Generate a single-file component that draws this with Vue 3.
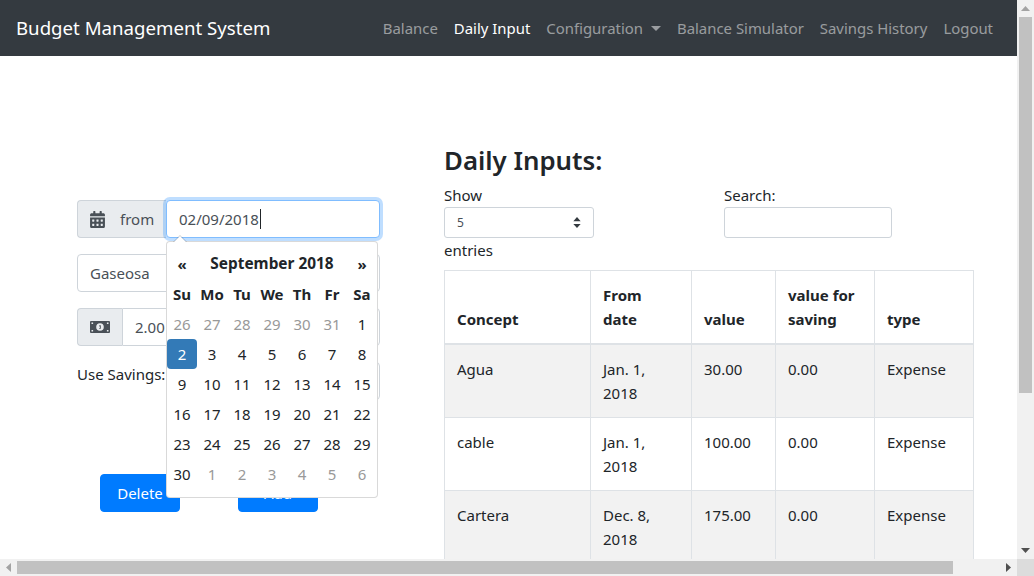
<template>
  <div class="frame">
    <div class="page">
      <nav class="navbar">
        <span class="brand">Budget Management System</span>
        <div class="nav-links">
          <a v-for="link in links" :key="link.label" class="nav-link" :class="{ active: link.active }">
            {{ link.label }}<span v-if="link.dropdown" class="caret"></span>
          </a>
        </div>
      </nav>

      <div class="content">
        <section class="form-col">
          <div class="input-group date-group">
            <div class="prepend from">
              <svg class="icon-cal" viewBox="0 0 448 512"><path fill="#495057" d="M0 464c0 26.500 21.500 48 48 48h352c26.500 0 48-21.500 48-48V192H0v272zm320-196c0-6.600 5.400-12 12-12h40c6.600 0 12 5.400 12 12v40c0 6.600-5.400 12-12 12h-40c-6.600 0-12-5.400-12-12v-40zm0 128c0-6.600 5.400-12 12-12h40c6.600 0 12 5.400 12 12v40c0 6.600-5.400 12-12 12h-40c-6.600 0-12-5.400-12-12v-40zM192 268c0-6.600 5.400-12 12-12h40c6.600 0 12 5.400 12 12v40c0 6.600-5.400 12-12 12h-40c-6.600 0-12-5.400-12-12v-40zm0 128c0-6.600 5.400-12 12-12h40c6.600 0 12 5.400 12 12v40c0 6.600-5.400 12-12 12h-40c-6.600 0-12-5.400-12-12v-40zM64 268c0-6.600 5.400-12 12-12h40c6.600 0 12 5.400 12 12v40c0 6.600-5.400 12-12 12H76c-6.600 0-12-5.400-12-12v-40zm0 128c0-6.600 5.400-12 12-12h40c6.600 0 12 5.400 12 12v40c0 6.600-5.400 12-12 12H76c-6.600 0-12-5.400-12-12v-40zM400 64h-48V16c0-8.800-7.200-16-16-16h-32c-8.800 0-16 7.200-16 16v48H160V16c0-8.800-7.200-16-16-16h-32c-8.800 0-16 7.200-16 16v48H48C21.500 64 0 85.500 0 112v48h448v-48c0-26.500-21.500-48-48-48z"/></svg>
              <span>from</span>
            </div>
            <div class="control focused">02/09/2018<span class="text-caret"></span></div>

            <div class="datepicker">
              <div class="dp-head">
                <span class="dp-nav">«</span>
                <span class="dp-title">September 2018</span>
                <span class="dp-nav">»</span>
              </div>
              <div class="dp-grid">
                <span v-for="d in dow" :key="d" class="dp-cell dow">{{ d }}</span>
                <span
                  v-for="(day, i) in days"
                  :key="i"
                  class="dp-cell"
                  :class="{ old: day.old, selected: day.selected }"
                >{{ day.n }}</span>
              </div>
            </div>
          </div>

          <div class="control plain">Gaseosa</div>

          <div class="input-group">
            <div class="prepend money">
              <svg class="icon-money" viewBox="0 0 20 12">
                <path fill="#495057" fill-rule="evenodd" d="M1 0h18a1 1 0 0 1 1 1v10a1 1 0 0 1-1 1H1a1 1 0 0 1-1-1V1a1 1 0 0 1 1-1zm9 2.200a3.800 3.800 0 1 0 0 7.600 3.800 3.800 0 0 0 0-7.600zM1.500 1.500v1.600h1.600V1.500zm15.400 0v1.600h1.600V1.500zM1.500 8.900v1.600h1.600V8.900zm15.400 0v1.600h1.600V8.900z"/>
                <path fill="#495057" d="M9.500 4.200h1.300v3.600h-1.600v-.8h.7V5.300l-.6.300-.3-.7z"/>
              </svg>
            </div>
            <div class="control">2.00</div>
          </div>

          <div class="savings-row">
            <span class="savings-label">Use Savings:</span>
            <input class="control savings-input" />
          </div>

          <div class="buttons">
            <button class="btn">Delete</button>
            <button class="btn">Add</button>
          </div>
        </section>

        <section class="list-col">
          <h2 class="title">Daily Inputs:</h2>
          <div class="table-tools">
            <div class="length">
              <span>Show</span>
              <div class="select-sm">
                <span>5</span>
                <svg class="select-arrows" viewBox="0 0 8 12"><path fill="#343a40" d="M4 0 8 4.500H0zM4 12 0 7.500h8z"/></svg>
              </div>
              <span>entries</span>
            </div>
            <div class="search">
              <span>Search:</span>
              <input class="search-input" />
            </div>
          </div>

          <table class="data-table">
            <colgroup>
              <col v-for="w in colWidths" :key="w" :style="{ width: w + 'px' }" />
            </colgroup>
            <thead>
              <tr>
                <th v-for="h in headers" :key="h">{{ h }}</th>
              </tr>
            </thead>
            <tbody>
              <tr v-for="row in rows" :key="row.concept">
                <td>{{ row.concept }}</td>
                <td>{{ row.date }}</td>
                <td>{{ row.value }}</td>
                <td>{{ row.saving }}</td>
                <td>{{ row.type }}</td>
              </tr>
            </tbody>
          </table>
        </section>
      </div>
    </div>

    <div class="vbar">
      <svg class="arrow" viewBox="0 0 17 17"><path fill="#a3a3a3" d="M8.500 6 13 11H4z"/></svg>
      <div class="vtrack"><div class="vthumb"></div></div>
      <svg class="arrow" viewBox="0 0 17 17"><path fill="#505050" d="M8.500 11 4 6h9z"/></svg>
    </div>
    <div class="hbar">
      <svg class="arrow" viewBox="0 0 17 17"><path fill="#a3a3a3" d="M6 8.500 11 4v9z"/></svg>
      <div class="htrack"><div class="hthumb"></div></div>
      <svg class="arrow" viewBox="0 0 17 17"><path fill="#505050" d="M11 8.500 6 13V4z"/></svg>
    </div>
    <div class="corner"></div>
  </div>
</template>

<script setup>
const links = [
  { label: 'Balance' },
  { label: 'Daily Input', active: true },
  { label: 'Configuration', dropdown: true },
  { label: 'Balance Simulator' },
  { label: 'Savings History' },
  { label: 'Logout' }
]

const dow = ['Su', 'Mo', 'Tu', 'We', 'Th', 'Fr', 'Sa']

const days = [
  ...[26, 27, 28, 29, 30, 31].map((n) => ({ n, old: true })),
  ...Array.from({ length: 30 }, (_, i) => ({ n: i + 1, selected: i === 1 })),
  ...[1, 2, 3, 4, 5, 6].map((n) => ({ n, old: true }))
]

const colWidths = [146, 101, 84, 99, 99]
const headers = ['Concept', 'From date', 'value', 'value for saving', 'type']

const rows = [
  { concept: 'Agua', date: 'Jan. 1, 2018', value: '30.00', saving: '0.00', type: 'Expense' },
  { concept: 'cable', date: 'Jan. 1, 2018', value: '100.00', saving: '0.00', type: 'Expense' },
  { concept: 'Cartera', date: 'Dec. 8, 2018', value: '175.00', saving: '0.00', type: 'Expense' }
]
</script>

<style>
html,
body {
  margin: 0;
  overflow: hidden;
}
</style>

<style scoped>
.frame {
  width: 1034px;
  height: 576px;
  display: grid;
  grid-template-columns: 1017px 17px;
  grid-template-rows: 559px 17px;
  overflow: hidden;
  font-family: "Noto Sans", "Open Sans", sans-serif;
  font-size: 15px;
  line-height: 24px;
  color: #212529;
  background: #fff;
}

.page {
  overflow: hidden;
}

.navbar {
  height: 56px;
  box-sizing: border-box;
  display: flex;
  align-items: center;
  justify-content: space-between;
  padding: 0 16px;
  background: #343a40;
}

.brand {
  font-size: 18.65px;
  color: #fff;
}

.nav-links {
  display: flex;
  font-size: 14.92px;
}

.nav-link {
  padding: 0 8px;
  color: rgba(255, 255, 255, 0.5);
  white-space: nowrap;
}

.nav-link.active {
  color: #fff;
}

.caret {
  display: inline-block;
  margin-left: 8px;
  vertical-align: 3px;
  border-top: 5px solid rgba(255, 255, 255, 0.5);
  border-left: 5px solid transparent;
  border-right: 5px solid transparent;
}

.content {
  display: flex;
  padding-left: 77px;
  gap: 64px;
}

.form-col {
  width: 303px;
  flex: none;
  padding-top: 144px;
  display: flex;
  flex-direction: column;
  gap: 16px;
}

.input-group {
  position: relative;
  display: flex;
  height: 38px;
}

.prepend {
  flex: none;
  box-sizing: border-box;
  display: flex;
  align-items: center;
  background: #e9ecef;
  border: 1px solid #ced4da;
  border-right: none;
  border-radius: 4px 0 0 4px;
  color: #495057;
}

.from {
  width: 89px;
  padding-left: 12px;
  gap: 15px;
}

.money {
  width: 45px;
  padding-left: 12px;
}

.icon-cal {
  width: 15px;
  height: 17px;
}

.icon-money {
  width: 20px;
  height: 12px;
}

.control {
  flex: 1;
  box-sizing: border-box;
  height: 38px;
  display: flex;
  align-items: center;
  padding: 0 12px;
  border: 1px solid #ced4da;
  border-radius: 0 4px 4px 0;
  background: #fff;
  color: #495057;
  font: inherit;
  min-width: 0;
}

.control.plain {
  flex: none;
  border-radius: 4px;
}

.control.focused {
  border-color: #80bdff;
  border-radius: 4px;
  box-shadow: 0 0 0 3px rgba(0, 123, 255, 0.25);
}

.text-caret {
  width: 1px;
  height: 20px;
  margin-left: 1px;
  background: #212529;
}

.savings-row {
  display: flex;
  align-items: flex-start;
  gap: 6px;
}

.savings-input {
  border-radius: 4px;
  outline: none;
}

.buttons {
  display: flex;
  gap: 58px;
  margin: 58px 0 0 23px;
}

.btn {
  width: 80px;
  height: 38px;
  padding: 0;
  border: 1px solid #007bff;
  border-radius: 4px;
  background: #007bff;
  color: #fff;
  font: inherit;
}

.datepicker {
  position: absolute;
  z-index: 2;
  top: 41px;
  left: 89px;
  width: 212px;
  height: 257px;
  box-sizing: border-box;
  padding: 7px 0 0;
  background: #fff;
  border: 1px solid rgba(0, 0, 0, 0.15);
  border-radius: 4px;
  color: #212529;
}

.datepicker::before {
  content: "";
  position: absolute;
  top: -7px;
  left: 6px;
  border-left: 7px solid transparent;
  border-right: 7px solid transparent;
  border-bottom: 7px solid rgba(0, 0, 0, 0.2);
}

.datepicker::after {
  content: "";
  position: absolute;
  top: -6px;
  left: 7px;
  border-left: 6px solid transparent;
  border-right: 6px solid transparent;
  border-bottom: 6px solid #fff;
}

.dp-head {
  height: 30px;
  display: grid;
  grid-template-columns: 30px 1fr 30px;
  align-items: center;
  text-align: center;
  font-weight: 700;
}

.dp-title {
  font-size: 15.4px;
}

.dp-grid {
  display: grid;
  grid-template-columns: repeat(7, 30px);
  grid-auto-rows: 30px;
}

.dp-cell {
  display: flex;
  align-items: center;
  justify-content: center;
}

.dow {
  font-weight: 700;
}

.old {
  color: #999;
}

.selected {
  background: #337ab7;
  color: #fff;
  border-radius: 4px;
}

.list-col {
  width: 530px;
  flex: none;
}

.title {
  margin: 86px 0 5px;
  font-size: 25.8px;
  line-height: 36px;
  font-weight: 600;
}

.table-tools {
  display: flex;
  height: 86px;
}

.length {
  width: 280px;
  flex: none;
  display: flex;
  flex-direction: column;
  align-items: flex-start;
}

.select-sm {
  width: 150px;
  height: 31px;
  box-sizing: border-box;
  display: flex;
  align-items: center;
  justify-content: space-between;
  padding: 0 12px;
  border: 1px solid #ced4da;
  border-radius: 3px;
  color: #495057;
  font-size: 12px;
}

.select-arrows {
  width: 8px;
  height: 11px;
}

.search-input {
  display: block;
  width: 168px;
  height: 31px;
  box-sizing: border-box;
  border: 1px solid #ced4da;
  border-radius: 3px;
  outline: none;
}

.data-table {
  width: 529px;
  table-layout: fixed;
  border-collapse: collapse;
  margin-top: 1px;
}

.data-table th,
.data-table td {
  padding: 12px;
  border: 1px solid #dee2e6;
  text-align: left;
  vertical-align: top;
}

.data-table th {
  vertical-align: bottom;
  border-bottom-width: 2px;
  font-weight: 700;
}

.data-table tbody tr:nth-child(odd) {
  background: #f2f2f2;
}

.vbar {
  display: flex;
  flex-direction: column;
  background: #f1f1f1;
}

.hbar {
  display: flex;
  background: #f1f1f1;
}

.arrow {
  width: 17px;
  height: 17px;
  flex: none;
}

.vtrack {
  flex: 1;
}

.vthumb {
  width: 13px;
  height: 376px;
  margin-left: 2px;
  background: #c1c1c1;
}

.htrack {
  flex: 1;
}

.hthumb {
  width: 936px;
  height: 13px;
  margin-top: 2px;
  background: #c1c1c1;
}

.corner {
  background: #dcdcdc;
}
</style>
